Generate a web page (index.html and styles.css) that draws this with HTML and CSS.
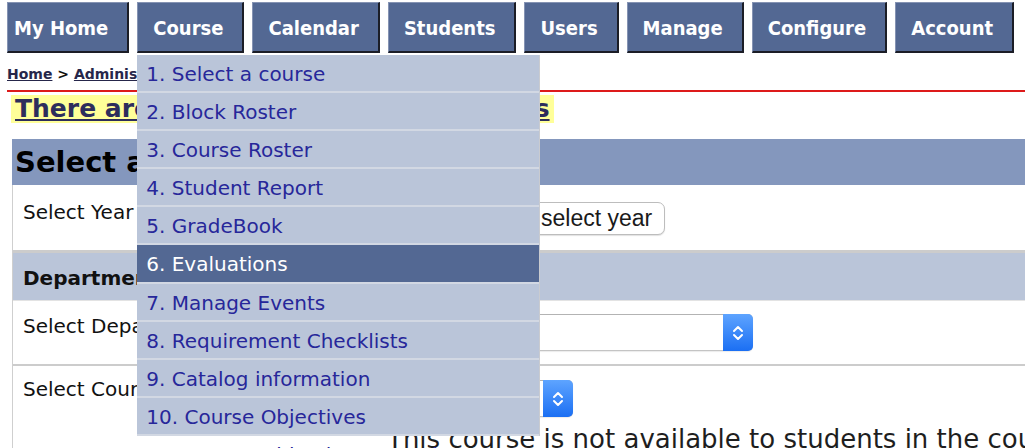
FILE: index.html
```html
<!DOCTYPE html>
<html lang="en">
<head>
<meta charset="utf-8">
<title>Select a Course</title>
<link rel="stylesheet" href="styles.css">
</head>
<body>
<nav class="topnav">
  <div class="nav-item"><a class="nav-btn nav-btn-first" href="#">My Home</a></div>
  <div class="nav-item nav-item-open">
    <a class="nav-btn" href="#">Course</a>
    <ul class="menu">
      <li class="menu-item"><a href="#">1. Select a course</a></li>
      <li class="menu-item"><a href="#">2. Block Roster</a></li>
      <li class="menu-item"><a href="#">3. Course Roster</a></li>
      <li class="menu-item"><a href="#">4. Student Report</a></li>
      <li class="menu-item"><a href="#">5. GradeBook</a></li>
      <li class="menu-item menu-item-active"><a href="#">6. Evaluations</a></li>
      <li class="menu-item"><a href="#">7. Manage Events</a></li>
      <li class="menu-item"><a href="#">8. Requirement Checklists</a></li>
      <li class="menu-item"><a href="#">9. Catalog information</a></li>
      <li class="menu-item"><a href="#">10. Course Objectives</a></li>
      <li class="menu-item menu-item-overflow"><a href="#">11. Course Objectives Overview</a></li>
    </ul>
  </div>
  <div class="nav-item"><a class="nav-btn" href="#">Calendar</a></div>
  <div class="nav-item"><a class="nav-btn" href="#">Students</a></div>
  <div class="nav-item"><a class="nav-btn" href="#">Users</a></div>
  <div class="nav-item"><a class="nav-btn" href="#">Manage</a></div>
  <div class="nav-item"><a class="nav-btn" href="#">Configure</a></div>
  <div class="nav-item"><a class="nav-btn" href="#">Account</a></div>
</nav>

<div class="breadcrumb"><a href="#">Home</a> &gt; <a href="#">Administration</a> &gt; <a href="#">Courses</a></div>

<div class="notice"><a href="#">There are pending course evaluations</a></div>

<h1 class="page-title">Select a Course</h1>

<div class="form-table">
  <div class="form-row form-row-year">
    <div class="form-label">Select Year</div>
    <div class="form-control">
      <span class="select select-year"><span class="select-value">2014</span><span class="select-arrows"><svg viewBox="0 0 16 20" width="16" height="20"><path d="M4 8 L8 4 L12 8 M4 12 L8 16 L12 12" fill="none" stroke="#fff" stroke-width="2" stroke-linecap="round" stroke-linejoin="round"/></svg></span></span>
      <button class="btn" type="button">select year</button>
    </div>
  </div>
  <div class="form-row form-row-section">
    <div class="form-label form-label-bold">Department</div>
  </div>
  <div class="form-row form-row-dept">
    <div class="form-label">Select Department</div>
    <div class="form-control">
      <span class="select select-dept"><span class="select-value"></span><span class="select-arrows"><svg viewBox="0 0 16 20" width="16" height="20"><path d="M4 8 L8 4 L12 8 M4 12 L8 16 L12 12" fill="none" stroke="#fff" stroke-width="2" stroke-linecap="round" stroke-linejoin="round"/></svg></span></span>
    </div>
  </div>
  <div class="form-row form-row-course">
    <div class="form-label">Select Course</div>
    <div class="form-control">
      <span class="select select-course"><span class="select-value"></span><span class="select-arrows"><svg viewBox="0 0 16 20" width="16" height="20"><path d="M4 8 L8 4 L12 8 M4 12 L8 16 L12 12" fill="none" stroke="#fff" stroke-width="2" stroke-linecap="round" stroke-linejoin="round"/></svg></span></span>
      <p class="form-note">This course is not available to students in the course catalog.</p>
    </div>
  </div>
</div>
</body>
</html>
```

FILE: styles.css
```css
html, body {
  overflow: hidden;
}

body {
  margin: 2px 0 0 7px;
  background: #fff;
  font-family: "DejaVu Sans", Verdana, sans-serif;
  color: #111;
}

/* ---- top navigation ---- */
.topnav {
  display: flex;
  gap: 8px;
  height: 51px;
}

.nav-item {
  position: relative;
}

.nav-btn {
  display: block;
  box-sizing: border-box;
  height: 51px;
  padding: 3px 19px 0 15px;
  line-height: 45px;
  background: #536893;
  color: #fff;
  text-decoration: none;
  font-family: "DejaVu Sans Condensed", "DejaVu Sans", sans-serif;
  font-stretch: condensed;
  font-weight: bold;
  font-size: 20px;
  border-top: 1px solid #8593b3;
  border-left: 1px solid #8593b3;
  border-right: 2px solid #1b1d26;
  border-bottom: 2px solid #1b1d26;
}

.nav-btn-first {
  padding-left: 6px;
}

/* ---- Course dropdown ---- */
.menu {
  position: absolute;
  z-index: 10;
  top: 100%;
  left: 0;
  margin: 2px 0 0;
  padding: 0;
  list-style: none;
  width: 403px;
  height: 381px;
  box-sizing: border-box;
  background: #bac5d9;
  border-right: 1px solid #c9cbd0;
}

.menu-item {
  height: 36.1px;
  border-bottom: 2px solid #d2d8e3;
}

.menu-item a {
  display: block;
  height: 100%;
  padding: 2px 0 0 9px;
  box-sizing: border-box;
  line-height: 35px;
  font-size: 20px;
  color: #27279a;
  text-decoration: none;
  white-space: nowrap;
}

.menu-item-active {
  background: #536893;
}

.menu-item-active a {
  color: #fff;
}

.menu-item-overflow {
  border-bottom: none;
}

/* ---- breadcrumb & notice ---- */
.breadcrumb {
  margin-top: 11px;
  line-height: 20px;
  padding-bottom: 6px;
  border-bottom: 2px solid #dd1a1a;
  font-size: 14px;
  font-weight: bold;
  color: #111;
}

.breadcrumb a {
  color: #26264a;
}

.notice {
  margin-top: 3px;
  padding-left: 4px;
  height: 28px;
  font-size: 25px;
  line-height: 28px;
}

.notice a {
  display: inline-block;
  vertical-align: top;
  padding: 0 4px;
  background: #ffff99;
  color: #2d2d5c;
  font-weight: bold;
}

.page-title {
  margin: 16px 0 0 5px;
  height: 46px;
  padding-left: 3px;
  line-height: 46px;
  background: #8497bd;
  font-size: 29px;
  font-weight: bold;
  color: #000;
}

/* ---- form table ---- */
.form-table {
  margin-left: 5px;
  border-left: 1px solid #cfcfcf;
  overflow: hidden;
}

.form-row {
  display: flex;
  background: #fff;
}

.form-label {
  width: 374px;
  flex: none;
  padding-left: 10px;
  box-sizing: border-box;
  line-height: 24px;
  font-size: 20px;
  color: #111;
  white-space: nowrap;
}

.form-label-bold {
  font-weight: bold;
}

.form-control {
  flex: 1;
  min-width: 0;
}

.form-row-year {
  height: 65px;
  border-bottom: 3px solid #cccccc;
}
.form-row-year .form-label { padding-top: 15px; }
.form-row-year .form-control {
  display: flex;
  align-items: flex-start;
  gap: 12px;
  padding-top: 17px;
}

.form-row-section {
  height: 47px;
  background: #bac5d9;
}
.form-row-section .form-label { padding-top: 13px; }

.form-row-dept {
  height: 63px;
  border-top: 1px solid #e3e3e3;
  border-bottom: 2px solid #cccccc;
}
.form-row-dept .form-label { padding-top: 13px; }
.form-row-dept .form-control { padding-top: 13px; }

.form-row-course {
  height: 120px;
}
.form-row-course .form-label { padding-top: 11px; }
.form-row-course .form-control { padding-top: 14px; }

/* select boxes */
.select {
  display: flex;
  box-sizing: border-box;
  height: 37px;
  background: #fff;
  border: 1px solid #c4c4c4;
  border-top-color: #b3b3b3;
  border-radius: 5px;
  box-shadow: 0 1px 1px rgba(0, 0, 0, 0.08);
}

.select-value {
  flex: 1;
  padding-left: 8px;
  line-height: 35px;
  font-family: "Liberation Sans", Arial, sans-serif;
  font-size: 20px;
}

.select-arrows {
  flex: none;
  width: 30px;
  margin: -1px -1px -1px 0;
  display: flex;
  align-items: center;
  justify-content: center;
  border-radius: 0 5px 5px 0;
  background: linear-gradient(#5ea4ff, #1b6ff3);
}

.select-year { width: 127px; }
.select-dept { width: 366px; }
.select-course { width: 186px; }

.btn {
  height: 33px;
  padding: 0 12px 0 14px;
  background: #fff;
  border: 1px solid #bdbdbd;
  border-radius: 7px;
  box-shadow: 0 1px 1px rgba(0, 0, 0, 0.12);
  font-family: "Liberation Sans", Arial, sans-serif;
  font-size: 23px;
  color: #1a1a1a;
  line-height: 31px;
}

.form-note {
  margin: 7px 0 0;
  line-height: 30px;
  font-size: 26px;
  color: #1e1e1e;
  white-space: nowrap;
}
```
